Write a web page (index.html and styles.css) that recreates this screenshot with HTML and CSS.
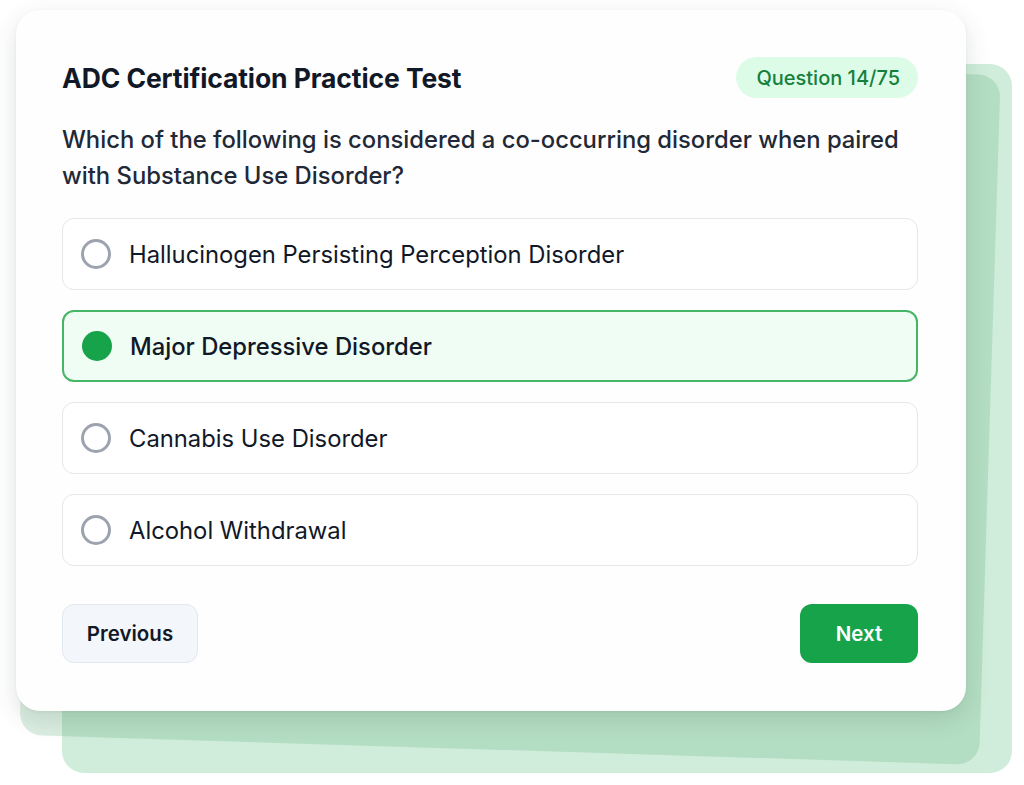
FILE: index.html
```html
<!DOCTYPE html>
<html lang="en">
<head>
<meta charset="utf-8">
<title>ADC Certification Practice Test</title>
<link rel="stylesheet" href="styles.css">
</head>
<body>
<div class="stage">
  <div class="layer layer-back"></div>
  <div class="layer layer-mid"></div>
  <main class="card">
    <header class="card-head">
      <h1 class="title">ADC Certification Practice Test</h1>
      <span class="badge">Question 14/75</span>
    </header>
    <p class="question">Which of the following is considered a co-occurring disorder when paired with Substance Use Disorder?</p>
    <ul class="options">
      <li class="option"><span class="radio"></span><span class="label">Hallucinogen Persisting Perception Disorder</span></li>
      <li class="option selected"><span class="radio"></span><span class="label">Major Depressive Disorder</span></li>
      <li class="option"><span class="radio"></span><span class="label">Cannabis Use Disorder</span></li>
      <li class="option"><span class="radio"></span><span class="label">Alcohol Withdrawal</span></li>
    </ul>
    <div class="actions">
      <button class="btn btn-prev">Previous</button>
      <button class="btn btn-next">Next</button>
    </div>
  </main>
</div>
</body>
</html>
```
FILE: styles.css
```css
* { box-sizing: border-box; }
html, body { margin: 0; padding: 0; background: #ffffff; }
body {
  font-family: Inter, "Noto Sans", "Liberation Sans", sans-serif;
  width: 1024px;
  height: 785px;
  overflow: hidden;
}
.stage {
  position: relative;
  width: 1024px;
  height: 785px;
  padding: 10px 0 0 16px;
}
.layer {
  position: absolute;
  border-radius: 22px;
  background: rgba(22, 163, 74, 0.2);
}
.layer-back {
  left: 62px;
  top: 64px;
  width: 950px;
  height: 709px;
}
.layer-mid {
  left: 30px;
  top: 60px;
  width: 960px;
  height: 690px;
  transform: rotate(1.8deg);
  background: rgba(40, 150, 80, 0.17);
}
.card {
  position: relative;
  width: 950px;
  height: 701px;
  background: #fefefe;
  border-radius: 24px;
  box-shadow: 0 8px 24px rgba(20, 60, 35, 0.14), 0 1px 3px rgba(0, 0, 0, 0.05);
  padding: 47px 48px 48px 46px;
  display: flex;
  flex-direction: column;
}
.card-head {
  display: flex;
  justify-content: space-between;
  align-items: center;
  height: 41px;
}
.title {
  margin: 0;
  font-size: 26.5px;
  font-weight: 700;
  color: #111827;
  letter-spacing: -0.1px;
}
.badge {
  display: inline-flex;
  align-items: center;
  height: 41px;
  padding: 0 18px 0 20px;
  border-radius: 999px;
  background: #dcfce7;
  color: #15803d;
  font-size: 20px;
  font-weight: 500;
}
.question {
  margin: 24px 0 0;
  font-size: 23.8px;
  line-height: 36px;
  font-weight: 500;
  color: #1f2937;
}
.options {
  list-style: none;
  margin: 24px 0 0;
  padding: 0;
  display: flex;
  flex-direction: column;
  gap: 20px;
}
.option {
  display: flex;
  align-items: center;
  gap: 18px;
  height: 72px;
  padding: 0 18px;
  border: 1.5px solid #e5e7eb;
  border-radius: 12px;
  background: #ffffff;
}
.radio {
  width: 30px;
  height: 30px;
  border-radius: 50%;
  border: 3px solid #9ca3af;
  flex: none;
}
.label {
  font-size: 23.8px;
  color: #111827;
  font-weight: 400;
}
.option.selected {
  background: #f0fdf4;
  border: 2px solid #45b566;
}
.option.selected .radio {
  border: none;
  background: #16a34a;
}
.option.selected .label {
  font-weight: 500;
}
.actions {
  display: flex;
  justify-content: space-between;
  margin-top: auto;
}
.btn {
  font-family: inherit;
  height: 59px;
  border-radius: 12px;
  font-size: 20.5px;
  font-weight: 600;
  cursor: pointer;
}
.btn-prev {
  width: 136px;
  background: #f3f6fa;
  border: 1.5px solid #e2e8f0;
  color: #111827;
}
.btn-next {
  width: 118px;
  background: #16a34a;
  border: none;
  color: #ffffff;
}
```
